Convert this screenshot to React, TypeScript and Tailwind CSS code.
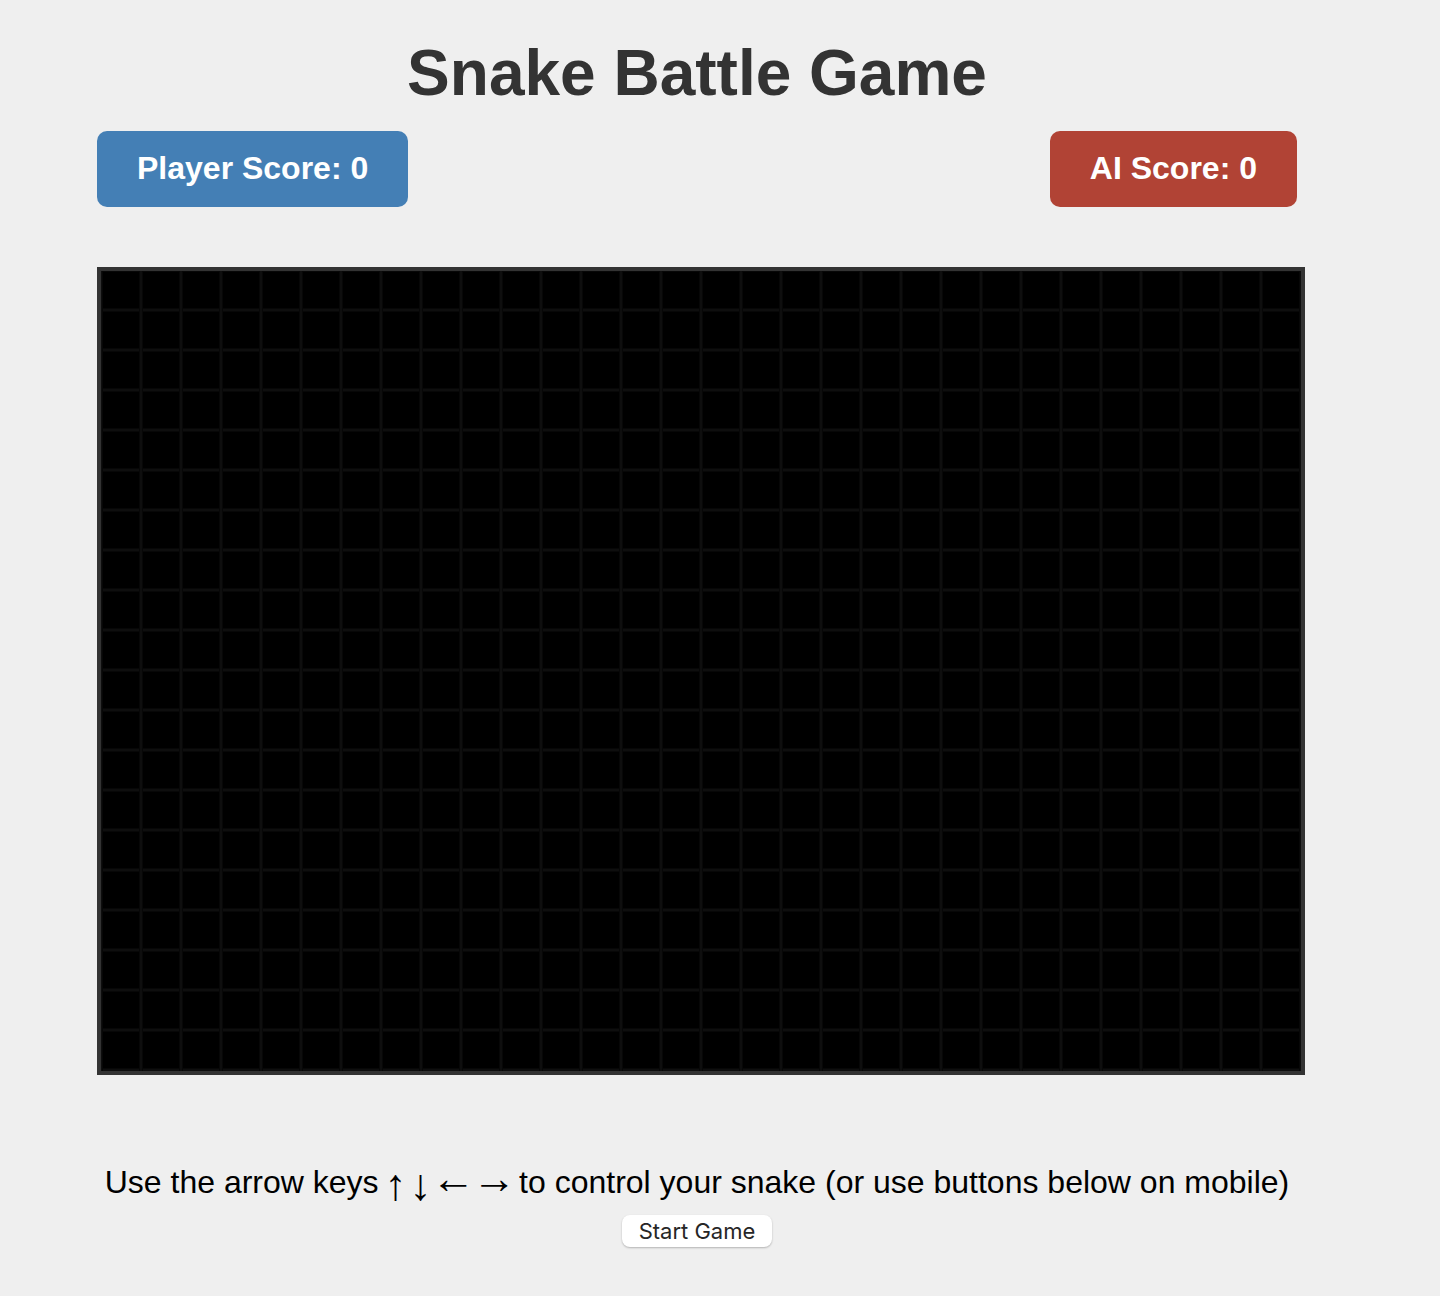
import React from "react";

export default function App() {
  return (
    <div className="flex min-h-screen justify-center bg-[#efefef] pt-[41px] pr-[46px] font-['Liberation_Sans',Arial,sans-serif] text-black">
      <main className="flex w-full max-w-[1200px] flex-col items-center">
        <h1 className="text-[64px] leading-16 font-bold text-[#333]">Snake Battle Game</h1>
        <div className="mt-[26px] mb-15 flex w-full justify-between text-[32px] leading-9 font-bold text-white">
          <div className="rounded-[10px] bg-[#447fb5] px-10 pt-[19px] pb-[21px]">Player Score: 0</div>
          <div className="rounded-[10px] bg-[#b14335] px-10 pt-[19px] pb-[21px]">AI Score: 0</div>
        </div>
        <div
          role="img"
          aria-label="Game board"
          className="box-content aspect-3/2 w-full self-start border-4 border-[#333] bg-black bg-[linear-gradient(to_right,#0e0e0e_1px,#070707_1px,#070707_2px,transparent_2px,transparent_38px,#070707_38px,#070707_39px,#0e0e0e_39px),linear-gradient(to_bottom,#0e0e0e_1px,#070707_1px,#070707_2px,transparent_2px,transparent_38px,#070707_38px,#070707_39px,#0e0e0e_39px)] bg-size-[40px_40px] bg-position-[0_-1px]"
        />
        <p className="mt-[87px] text-[32px] leading-10">
          Use the arrow keys{" "}
          <span className="inline-flex w-4 justify-center align-middle text-[44px] leading-6">↑</span>{" "}
          <span className="inline-flex w-4 justify-center align-middle text-[44px] leading-6">↓</span>{" "}
          <span className="inline-flex w-8 justify-center text-[44px] leading-6">←</span>{" "}
          <span className="inline-flex w-8 justify-center text-[44px] leading-6">→</span>{" "}
          to control your snake (or use buttons below on mobile)
        </p>
        <button type="button" className="mt-[13px] h-8 rounded-lg bg-white px-[17px] font-['Inter',sans-serif] text-[22px] leading-8 text-[#262626] shadow-[0_1px_2px_rgba(0,0,0,0.25)]">
          Start Game
        </button>
      </main>
    </div>
  );
}
